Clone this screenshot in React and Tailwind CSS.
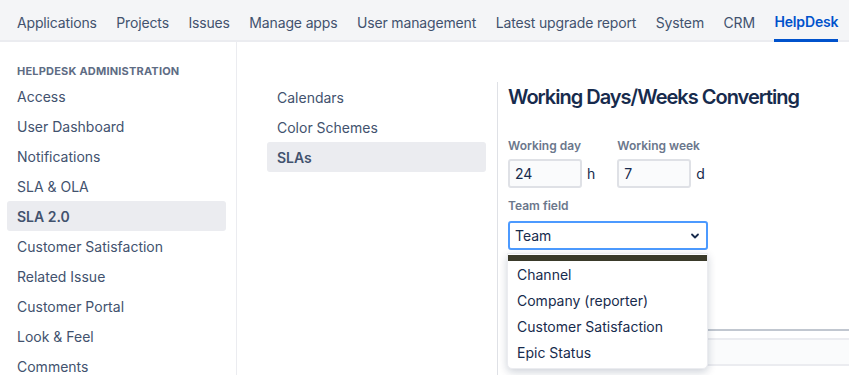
export default function App() {
  const nav = ['Applications', 'Projects', 'Issues', 'Manage apps', 'User management', 'Latest upgrade report', 'System', 'CRM'];
  const side = ['Access', 'User Dashboard', 'Notifications', 'SLA & OLA', 'SLA 2.0', 'Customer Satisfaction', 'Related Issue', 'Customer Portal', 'Look & Feel', 'Comments'];
  const options = ['Channel', 'Company (reporter)', 'Customer Satisfaction', 'Epic Status'];

  return (
    <div className="w-[849px] h-[375px] overflow-hidden bg-white text-[14px] text-[#42526e]" style={{ fontFamily: 'Inter, "Noto Sans", sans-serif' }}>
      {/* top nav */}
      <div className="h-[42px] bg-[#f4f5f7] border-b-2 border-[#ebecf0] flex items-stretch pl-[17px] gap-[19.5px] whitespace-nowrap tracking-[-0.15px]">
        {nav.map((n) => (
          <div key={n} className="shrink-0 flex items-center pt-[4px]">{n}</div>
        ))}
        <div className="shrink-0 flex items-center pt-[4px] text-[#0052cc] font-semibold border-b-[3px] border-[#0052cc] -mb-[2px]">HelpDesk</div>
      </div>

      <div className="flex h-[333px]">
        {/* sidebar */}
        <div className="w-[237px] shrink-0 border-r border-[#ebecf0] pt-[23px]">
          <div className="pl-[17px] text-[11px] leading-[12px] font-bold text-[#5e6c84] tracking-[0.2px]">HELPDESK ADMINISTRATION</div>
          <div className="mt-[4px] flex flex-col">
            {side.map((s) => (
              <div
                key={s}
                className={
                  'mx-[7px] h-[30px] w-[219px] px-[10px] flex items-center rounded-[3px] ' +
                  (s === 'SLA 2.0' ? 'bg-[#ebecf0] font-semibold' : '')
                }
              >
                {s}
              </div>
            ))}
          </div>
        </div>

        {/* middle menu */}
        <div className="w-[260px] shrink-0 pt-[40px] pl-[30px]">
          {['Calendars', 'Color Schemes', 'SLAs'].map((s) => (
            <div
              key={s}
              className={
                'h-[30px] w-[219px] px-[10px] flex items-center rounded-[3px] ' +
                (s === 'SLAs' ? 'bg-[#ebecf0] font-semibold' : '')
              }
            >
              {s}
            </div>
          ))}
        </div>

        {/* content */}
        <div className="flex-1 mt-[40px] border-l border-[#dfe1e6] pl-[10px] pt-[3px]">
          <h1 className="text-[20px] leading-[24px] font-semibold tracking-[-1px] text-[#172b4d]">Working Days/Weeks Converting</h1>

          <div className="mt-[29px] flex gap-[22px]">
            <div>
              <div className="text-[12px] leading-[16px] font-semibold text-[#6b778c]">Working day</div>
              <div className="mt-[5px] flex items-center gap-[5px]">
                <div className="w-[74px] h-[29px] bg-[#fafbfc] border-2 border-[#dfe1e6] rounded-[3px] px-[5px] flex items-center text-[#172b4d]">24</div>
                <span className="text-[#172b4d]">h</span>
              </div>
            </div>
            <div>
              <div className="text-[12px] leading-[16px] font-semibold text-[#6b778c]">Working week</div>
              <div className="mt-[5px] flex items-center gap-[5px]">
                <div className="w-[74px] h-[29px] bg-[#fafbfc] border-2 border-[#dfe1e6] rounded-[3px] px-[5px] flex items-center text-[#172b4d]">7</div>
                <span className="text-[#172b4d]">d</span>
              </div>
            </div>
          </div>

          <div className="mt-[10px] text-[12px] leading-[16px] font-semibold text-[#6b778c]">Team field</div>
          <div className="relative mt-[7px] w-[200px]">
            <div className="h-[29px] border-2 border-[#4c9aff] rounded-[3px] bg-white flex items-center justify-between pl-[5px] pr-[6px] text-[#172b4d]">
              <span>Team</span>
              <svg width="10" height="10" viewBox="0 0 10 10">
                <path d="M2 3.5 L5 6.5 L8 3.5" fill="none" stroke="#172b4d" strokeWidth="1.8" strokeLinecap="round" strokeLinejoin="round" />
              </svg>
            </div>

            {/* dropdown */}
            <div className="absolute z-10 left-[-1px] top-[32px] w-[201px] bg-white border border-[#ebecf0] rounded-b-[5px] shadow-[0_3px_8px_rgba(9,30,66,0.2)] pb-[3px] overflow-hidden">
              <div className="h-[6px] bg-[#3a3a2a] mt-[1px]" />
              {options.map((o) => (
                <div key={o} className="h-[26px] flex items-center pl-[9px] text-[#172b4d]">{o}</div>
              ))}
            </div>
          </div>

          {/* table behind */}
          <div className="mt-[79px] border-t-2 border-[#c1c7d0]" />
          <div className="mt-[7px] h-[28px] bg-[#fafbfc] border-y-2 border-[#ebecf0]" />
        </div>
      </div>
    </div>
  );
}
